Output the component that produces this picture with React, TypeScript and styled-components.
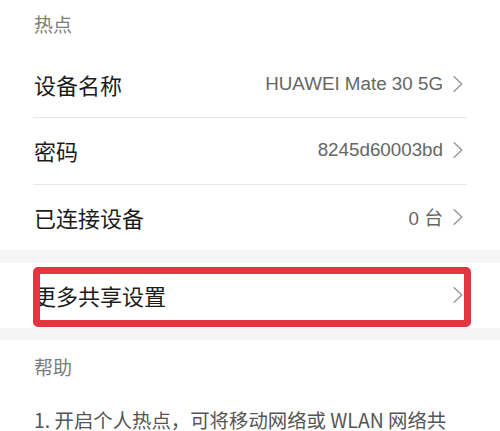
import React from "react";
import styled, { createGlobalStyle } from "styled-components";

const Global = createGlobalStyle`
  html, body { margin: 0; padding: 0; background: #ffffff; }
  body {
    font-family: "Noto Sans CJK SC", "Noto Sans", "Liberation Sans", sans-serif;
    -webkit-font-smoothing: antialiased;
  }
`;

const Page = styled.div`
  width: 500px;
  height: 431px;
  overflow: hidden;
  background: #ffffff;
  display: flex;
  flex-direction: column;
`;

const Group = styled.div`
  padding: 0 33px;
  background: #ffffff;
  display: flex;
  flex-direction: column;
`;

const Band = styled.div<{ $h: number }>`
  height: ${(p) => p.$h}px;
  background: #f5f5f5;
  flex-shrink: 0;
`;

const SectionHeader = styled.div<{ $h: number; $shift?: number }>`
  height: ${(p) => p.$h}px;
  display: flex;
  align-items: center;
  padding-bottom: ${(p) => p.$shift ?? 0}px;
  box-sizing: border-box;
  font-size: 19px;
  color: #7c7c7c;
  padding-left: 1px;
`;

const Row = styled.div<{ $h: number; $divider?: boolean }>`
  position: relative;
  height: ${(p) => p.$h}px;
  box-sizing: border-box;
  display: flex;
  align-items: center;
  padding-bottom: 2px;
  border-bottom: ${(p) => (p.$divider ? "1px solid #e6e6e6" : "none")};
`;

const Label = styled.span`
  font-size: 22px;
  color: #1b1b1b;
  flex: 1;
  padding-left: 1px;
`;

const Value = styled.span`
  font-family: "Liberation Sans", "Noto Sans CJK SC", sans-serif;
  font-size: 18.8px;
  color: #666666;
  margin-right: 10px;
`;

const ChevronWrap = styled.span`
  display: flex;
  align-items: center;
  margin-right: 4px;
`;

const Highlight = styled.div`
  position: absolute;
  left: 0;
  right: -4px;
  top: 4px;
  height: 60px;
  box-sizing: border-box;
  border: 7px solid #e5343f;
  border-radius: 5px;
  pointer-events: none;
`;

const HelpText = styled.p`
  margin: 13px 0 0;
  font-size: 19.4px;
  line-height: 22px;
  color: #555555;
  padding-left: 1px;
  white-space: nowrap;
`;

const Chevron = () => (
  <ChevronWrap>
    <svg width="10" height="16" viewBox="0 0 10 16">
      <polyline
        points="1.2,0.8 8.8,8 1.2,15.2"
        fill="none"
        stroke="#9a9a9a"
        strokeWidth="1.5"
        strokeLinecap="round"
        strokeLinejoin="round"
      />
    </svg>
  </ChevronWrap>
);

export default function App() {
  return (
    <>
      <Global />
      <Page>
        <Group>
          <SectionHeader $h={52} $shift={5}>热点</SectionHeader>
          <Row $h={66} $divider>
            <Label>设备名称</Label>
            <Value>HUAWEI Mate 30 5G</Value>
            <Chevron />
          </Row>
          <Row $h={67} $divider>
            <Label>密码</Label>
            <Value>8245d60003bd</Value>
            <Chevron />
          </Row>
          <Row $h={65}>
            <Label>已连接设备</Label>
            <Value>0 台</Value>
            <Chevron />
          </Row>
        </Group>
        <Band $h={13} />
        <Group>
          <Row $h={65}>
            <Label>更多共享设置</Label>
            <Chevron />
            <Highlight />
          </Row>
        </Group>
        <Band $h={12} />
        <Group>
          <SectionHeader $h={56} $shift={4}>帮助</SectionHeader>
          <HelpText>1. 开启个人热点，可将移动网络或 WLAN 网络共</HelpText>
        </Group>
      </Page>
    </>
  );
}
